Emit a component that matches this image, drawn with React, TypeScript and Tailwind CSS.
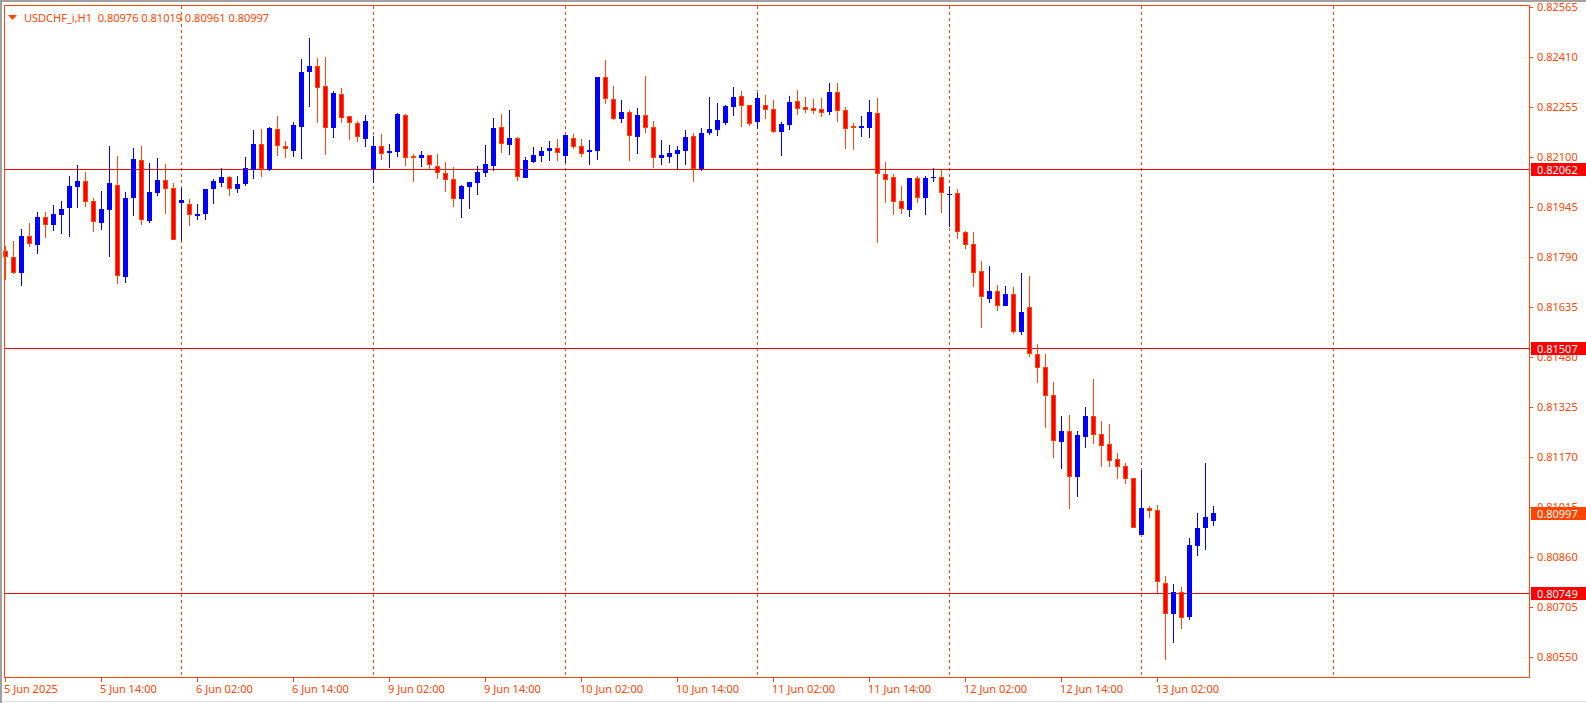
import React from "react";

// [blue?, bodyTop, bodyBottom, high, low] in screen px
const BARS: [number, number, number, number, number][] = [
  [0, 251, 257, 246, 280], [0, 257, 273, 241, 274], [1, 236, 273, 229, 286], [0, 236, 244, 223, 247],
  [1, 217, 245, 212, 254], [0, 217, 225, 212, 238], [1, 214, 225, 205, 231], [1, 209, 215, 201, 234],
  [1, 186, 208, 176, 237], [1, 181, 187, 165, 208], [0, 181, 202, 172, 207], [0, 201, 222, 198, 232],
  [1, 209, 223, 191, 230], [1, 183, 210, 146, 257], [0, 185, 276, 156, 284], [1, 198, 277, 192, 283],
  [1, 159, 198, 148, 216], [0, 160, 220, 146, 225], [1, 192, 221, 163, 223], [1, 180, 193, 158, 196],
  [0, 180, 189, 164, 214], [0, 188, 240, 183, 240], [1, 200, 203, 188, 241], [0, 204, 215, 199, 226],
  [1, 214, 216, 204, 220], [1, 189, 214, 189, 220], [1, 181, 189, 179, 204], [1, 177, 183, 168, 187],
  [0, 177, 189, 176, 196], [1, 184, 189, 176, 193], [1, 168, 184, 157, 186], [1, 144, 170, 130, 179],
  [0, 144, 169, 129, 177], [1, 128, 170, 127, 171], [0, 129, 146, 116, 156], [0, 146, 149, 141, 158],
  [1, 125, 151, 122, 157], [1, 72, 127, 59, 159], [1, 66, 72, 38, 107], [0, 66, 88, 58, 123],
  [0, 86, 128, 57, 155], [1, 93, 128, 91, 138], [0, 94, 118, 88, 123], [0, 116, 123, 116, 140],
  [0, 123, 137, 121, 142], [1, 121, 139, 115, 147], [1, 146, 169, 136, 183], [0, 146, 154, 134, 160],
  [1, 151, 153, 144, 168], [1, 114, 152, 113, 157], [0, 115, 158, 114, 166], [0, 156, 158, 154, 182],
  [1, 155, 158, 151, 167], [0, 155, 165, 155, 169], [0, 166, 173, 154, 179], [0, 173, 180, 162, 192],
  [0, 179, 199, 167, 207], [1, 186, 199, 185, 218], [1, 182, 187, 182, 209], [1, 172, 183, 166, 195],
  [1, 164, 173, 145, 177], [1, 128, 166, 118, 171], [0, 127, 144, 114, 153], [1, 138, 145, 110, 155],
  [0, 138, 177, 137, 181], [1, 160, 178, 157, 178], [1, 155, 162, 147, 163], [1, 151, 156, 147, 162],
  [1, 148, 151, 141, 161], [0, 148, 153, 139, 161], [1, 135, 156, 135, 163], [0, 138, 147, 134, 149],
  [0, 146, 154, 139, 157], [1, 150, 152, 140, 165], [1, 77, 151, 77, 160], [0, 77, 99, 60, 104],
  [0, 99, 119, 86, 120], [1, 112, 119, 100, 123], [0, 112, 136, 110, 161], [1, 115, 137, 108, 154],
  [0, 115, 128, 76, 133], [0, 127, 158, 121, 168], [1, 155, 158, 140, 165], [1, 153, 157, 145, 163],
  [1, 150, 154, 146, 169], [1, 137, 151, 130, 165], [0, 136, 169, 133, 182], [1, 133, 169, 128, 171],
  [1, 129, 133, 97, 135], [1, 120, 130, 103, 136], [1, 106, 123, 105, 125], [1, 97, 107, 87, 116],
  [0, 96, 106, 91, 127], [0, 105, 124, 105, 126], [1, 98, 122, 93, 129], [0, 105, 110, 95, 119],
  [0, 109, 132, 100, 133], [1, 124, 132, 122, 156], [1, 102, 125, 96, 130], [0, 101, 109, 90, 115],
  [0, 107, 110, 97, 113], [0, 108, 111, 99, 114], [0, 109, 113, 98, 117], [1, 92, 112, 83, 115],
  [0, 92, 111, 83, 122], [0, 110, 129, 107, 149], [0, 126, 128, 123, 150], [1, 126, 128, 116, 137],
  [1, 112, 128, 100, 138], [0, 113, 174, 98, 243], [0, 174, 180, 162, 203], [0, 177, 202, 174, 215],
  [0, 201, 209, 186, 214], [1, 178, 210, 178, 217], [0, 178, 198, 176, 203], [1, 178, 198, 176, 215],
  [1, 177, 178, 168, 182], [0, 177, 193, 169, 213], [1, 194, 195, 187, 227], [0, 193, 232, 189, 239],
  [0, 232, 245, 231, 249], [0, 244, 273, 232, 287], [0, 271, 297, 261, 328], [1, 291, 299, 266, 303],
  [0, 291, 306, 285, 311], [1, 294, 306, 286, 306], [0, 294, 332, 287, 334], [1, 312, 332, 273, 335],
  [0, 307, 354, 276, 357], [0, 354, 368, 344, 383], [0, 367, 396, 354, 428], [0, 395, 441, 382, 458],
  [1, 431, 442, 416, 469], [0, 431, 477, 415, 509], [1, 435, 477, 431, 497], [1, 416, 437, 407, 448],
  [0, 416, 435, 379, 444], [0, 434, 446, 421, 467], [0, 444, 461, 424, 467], [0, 459, 467, 453, 479],
  [0, 466, 479, 463, 484], [0, 478, 528, 478, 528], [1, 508, 535, 470, 535], [0, 508, 511, 506, 518],
  [0, 510, 582, 505, 594], [0, 583, 614, 576, 660], [1, 592, 614, 584, 643], [0, 592, 618, 587, 629],
  [1, 545, 617, 538, 620], [1, 528, 546, 513, 556], [1, 517, 528, 463, 550], [1, 513, 521, 506, 526],
];

const ORANGE = "#ff4500";

const PRICES = [
  "0.82565", "0.82410", "0.82255", "0.82100", "0.81945", "0.81790", "0.81635",
  "0.81480", "0.81325", "0.81170", "0.81015", "0.80860", "0.80705", "0.80550",
];

const TIMES = [
  "5 Jun 2025", "5 Jun 14:00", "6 Jun 02:00", "6 Jun 14:00", "9 Jun 02:00", "9 Jun 14:00",
  "10 Jun 02:00", "10 Jun 14:00", "11 Jun 02:00", "11 Jun 14:00", "12 Jun 02:00",
  "12 Jun 14:00", "13 Jun 02:00",
];

const LEVELS = [
  { y: 169, label: "0.82062", bg: "#ff0000" },
  { y: 348, label: "0.81507", bg: "#ff0000" },
  { y: 593, label: "0.80749", bg: "#ff0000" },
];

function Candle({ i, bar }: { i: number; bar: [number, number, number, number, number] }) {
  const [blue, top, bottom, high, low] = bar;
  const c = 5 + 8 * i;
  const h = Math.max(1, bottom - top);
  if (blue) {
    return (
      <g>
        <line x1={c + 0.5} x2={c + 0.5} y1={high} y2={low} stroke="#0000ff" />
        <rect x={c - 2} y={top} width={5} height={h} fill="#0000ff" />
      </g>
    );
  }
  return (
    <g>
      <line x1={c + 0.5} x2={c + 0.5} y1={high} y2={low} stroke={ORANGE} />
      {h > 2 ? (
        <rect x={c - 1.5} y={top + 0.5} width={4} height={h - 1} fill="#ff0000" stroke={ORANGE} />
      ) : (
        <rect x={c - 2} y={top} width={5} height={h} fill={ORANGE} />
      )}
    </g>
  );
}

export default function App() {
  return (
    <div className="relative w-[1586px] h-[703px] bg-white overflow-hidden border-t-2 border-l-2 border-[#a0a0a0] font-['DejaVu_Sans',sans-serif]">
      <svg width={1586} height={703} className="absolute -top-[2px] -left-[2px]" shapeRendering="crispEdges">
        {/* day separators */}
        {[0, 1, 2, 3, 4, 5, 6].map((k) => (
          <line key={k} x1={181.5 + 192 * k} x2={181.5 + 192 * k} y1={6} y2={677} stroke={ORANGE} strokeDasharray="3 3" />
        ))}
        {/* horizontal levels */}
        {LEVELS.map((l) => (
          <line key={l.label} x1={4} x2={1530} y1={l.y + 0.5} y2={l.y + 0.5} stroke="#ff0000" />
        ))}
        {BARS.map((b, i) => (
          <Candle key={i} i={i} bar={b} />
        ))}
        {/* frame */}
        <rect x={4.5} y={5.5} width={1525} height={672} fill="none" stroke={ORANGE} />
        {/* price axis */}
        {PRICES.map((p, n) => (
          <g key={p}>
            <line x1={1530} x2={1533} y1={7.5 + 50 * n} y2={7.5 + 50 * n} stroke={ORANGE} />
            <text x={1537} y={11 + 50 * n} fontSize={11} fill={ORANGE}>
              {p}
            </text>
          </g>
        ))}
        {[...LEVELS, { y: 513, label: "0.80997", bg: ORANGE }].map((l) => (
          <g key={"t" + l.label}>
            <rect x={1531} y={l.y - 6} width={55} height={13} fill={l.bg} />
            <text x={1537} y={l.y + 4.5} fontSize={11} fill="#ffffff">
              {l.label}
            </text>
          </g>
        ))}
        {/* time axis */}
        {TIMES.map((t, k) => (
          <g key={t}>
            <line x1={5.5 + 96 * k} x2={5.5 + 96 * k} y1={678} y2={682} stroke={ORANGE} />
            <text x={4 + 96 * k} y={693} fontSize={11} fill={ORANGE}>
              {t}
            </text>
          </g>
        ))}
        <line x1={0} x2={1586} y1={701.5} y2={701.5} stroke="#e0e0e0" />
      </svg>
      <div className="absolute top-[8px] left-[6px] flex items-center gap-[6px] text-[11px] text-[#ff4500] whitespace-pre">
        <svg width={10} height={6}>
          <polygon points="0,0 9,0 4.5,5" fill={ORANGE} />
        </svg>
        <span>USDCHF_i,H1  0.80976 0.81019 0.80961 0.80997</span>
      </div>
    </div>
  );
}
